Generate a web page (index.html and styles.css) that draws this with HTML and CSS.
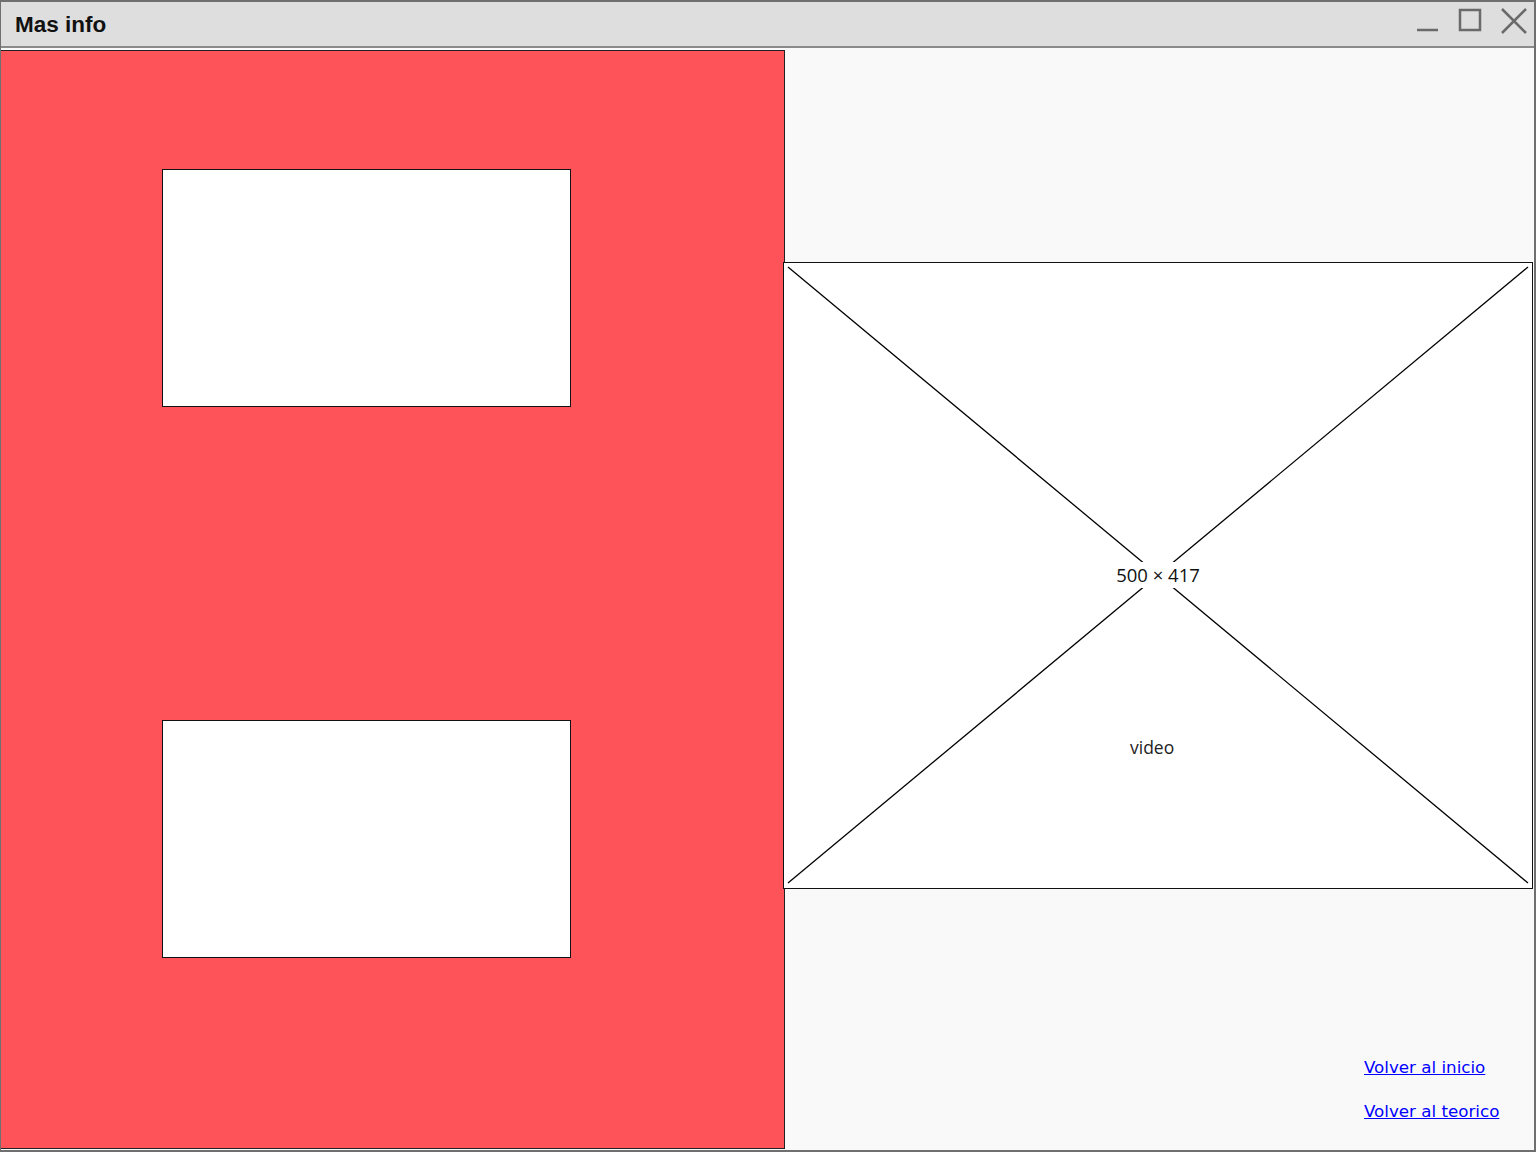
FILE: index.html
```html
<!DOCTYPE html>
<html lang="es">
<head>
<meta charset="utf-8">
<title>Mas info</title>
<link rel="stylesheet" href="styles.css">
</head>
<body>
<div class="window">
  <div class="titlebar">
    <span class="title">Mas info</span>
    <div class="controls">
      <svg class="ctl" width="24" height="26" viewBox="0 0 24 26"><line x1="1" y1="23" x2="22" y2="23" stroke="#6a6a6a" stroke-width="2.5"/></svg>
      <svg class="ctl" width="26" height="26" viewBox="0 0 26 26"><rect x="3" y="3" width="20" height="20" fill="none" stroke="#6a6a6a" stroke-width="2.5"/></svg>
      <svg class="ctl" width="28" height="28" viewBox="0 0 28 28"><path d="M2 2 L26 26 M26 2 L2 26" stroke="#6a6a6a" stroke-width="2.5" fill="none"/></svg>
    </div>
  </div>
  <div class="content">
    <div class="panel">
      <div class="card"></div>
      <div class="card"></div>
    </div>
    <div class="side">
      <div class="video">
        <svg class="cross" width="748" height="624" viewBox="0 0 748 624" preserveAspectRatio="none">
          <line x1="4" y1="4" x2="744" y2="620" stroke="#000" stroke-width="1.3"/>
          <line x1="744" y1="4" x2="4" y2="620" stroke="#000" stroke-width="1.3"/>
        </svg>
        <span class="dims">500 × 417</span>
        <span class="vlabel">video</span>
      </div>
      <div class="links">
        <a href="#" class="link">Volver al inicio</a>
        <a href="#" class="link">Volver al teorico</a>
      </div>
    </div>
  </div>
</div>
</body>
</html>
```

FILE: styles.css
```css
* { box-sizing: border-box; }
html, body { margin: 0; padding: 0; background: #f9f9f9; }
.window {
  width: 1536px;
  height: 1152px;
  border: 2px solid #6f6f6f;
  border-left-width: 1px;
  display: flex;
  flex-direction: column;
  background: #f9f9f9;
  overflow: hidden;
}
.titlebar {
  height: 46px;
  flex: none;
  background: #dedede;
  border-bottom: 2px solid #8a8a8a;
  display: flex;
  align-items: center;
  justify-content: space-between;
  padding: 0 6px 0 14px;
}
.title {
  font-family: "Liberation Sans", Arial, sans-serif;
  font-weight: bold;
  font-size: 22.5px;
  color: #111;
  margin-top: 2px;
}
.controls {
  display: flex;
  align-items: flex-start;
  gap: 17px;
  margin-top: -6px;
}
.content {
  flex: 1;
  display: flex;
  min-height: 0;
}
.panel {
  width: 785px;
  margin: 2px 0 1px -1px;
  background: #ff535a;
  border: 1px solid #222;
  display: flex;
  flex-direction: column;
  gap: 313px;
  padding: 118px 0 0 161px;
}
.card {
  width: 409px;
  height: 238px;
  background: #fff;
  border: 1.5px solid #111;
}
.side {
  flex: 1;
  display: flex;
  flex-direction: column;
  justify-content: space-between;
}
.video {
  position: relative;
  margin: 214px 0 0 -2px;
  width: 750px;
  height: 627px;
  background: #fff;
  border: 1px solid #111;
}
.cross {
  position: absolute;
  left: 0;
  top: 0;
}
.dims {
  position: absolute;
  left: 50%;
  top: 299px;
  transform: translateX(-50%);
  background: #fff;
  padding: 0 4px;
  font-family: "Open Sans", "DejaVu Sans", sans-serif;
  font-size: 18.5px;
  line-height: 26px;
  color: #111;
  white-space: nowrap;
}
.vlabel {
  position: absolute;
  left: 346px;
  top: 472px;
  font-family: "Open Sans", "DejaVu Sans", sans-serif;
  font-size: 17.5px;
  line-height: 24px;
  color: #222;
}
.links {
  display: flex;
  flex-direction: column;
  gap: 20px;
  padding: 0 0 27px 579px;
}
.link {
  font-family: "DejaVu Sans", sans-serif;
  font-size: 16.7px;
  line-height: 24px;
  color: #0000ff;
  text-decoration: underline;
  align-self: flex-start;
}
```
